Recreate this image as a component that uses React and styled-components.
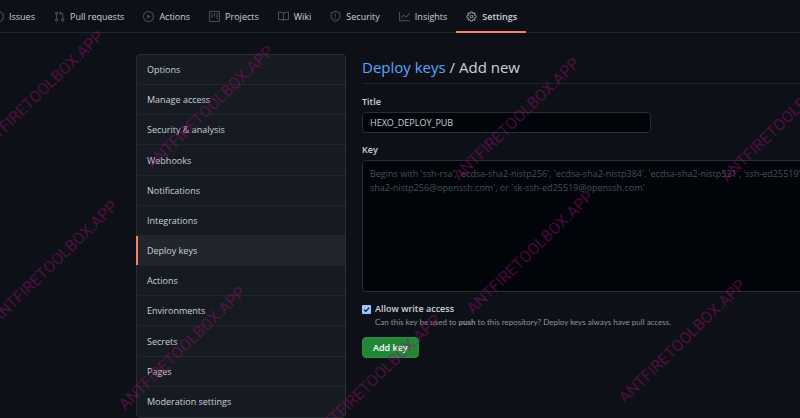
import React from "react";
import styled, { createGlobalStyle } from "styled-components";
import { GoGear } from "react-icons/go";

const GlobalStyle = createGlobalStyle`
  * { box-sizing: border-box; }
  body {
    margin: 0;
    background: #0d1117;
    color: #c9d1d9;
    font-family: "Open Sans", "Noto Sans", sans-serif;
    font-size: 9px;
    line-height: 14px;
    overflow: hidden;
  }
  button, input, textarea { font: inherit; color: inherit; }
`;

const Page = styled.div`
  position: relative;
  overflow: hidden;
  min-height: 100vh;
`;

const NavBar = styled.nav`
  display: flex;
  height: 33px;
  margin-left: -17px;
  border-bottom: 1px solid #21262d;
`;

const Tab = styled.a`
  display: flex;
  flex: none;
  align-items: center;
  gap: 5px;
  height: 33px;
  padding: 2px 9px 0 10px;
  border-bottom: 2px solid ${(p) => (p.$active ? "#f78166" : "transparent")};
  color: #c9d1d9;
  font-weight: ${(p) => (p.$active ? 600 : 400)};
  text-decoration: none;
  white-space: nowrap;
  svg {
    width: 11px;
    height: 11px;
    fill: ${(p) => (p.$active ? "#c9d1d9" : "#484f58")};
  }
`;

const Columns = styled.div`
  display: flex;
  align-items: flex-start;
  gap: 16px;
  padding: 21px 0 0 136px;
`;

const Menu = styled.nav`
  display: grid;
  grid-auto-rows: 1fr;
  flex: none;
  width: 210px;
  min-height: 364px;
  background: #161b22;
  border: 1px solid #282e35;
  border-radius: 4px;
`;

const MenuItem = styled.a`
  display: flex;
  align-items: center;
  margin-left: -1px;
  padding: 1px 10px 0 11px;
  color: #c9d1d9;
  text-decoration: none;
  border-bottom: 1px solid #21262d;
  background: ${(p) => (p.$active ? "#21262d" : "transparent")};
  box-shadow: ${(p) => (p.$active ? "inset 2px 0 0 #f78166" : "none")};
  &:last-child { border-bottom: 0; }
`;

const Main = styled.main`
  flex: 1 0 auto;
  width: 505px;
`;

const Heading = styled.h1`
  margin: 0 0 11px;
  padding: 2px 0 5px;
  border-bottom: 1px solid #21262d;
  font-size: 15px;
  line-height: 22px;
  font-weight: 400;
  a { color: #58a6ff; text-decoration: none; }
`;

const Form = styled.form`
  display: flex;
  flex-direction: column;
  align-items: flex-start;
`;

const Label = styled.label`
  font-weight: 600;
  margin-bottom: ${(p) => p.$gap || 0}px;
`;

const TextInput = styled.input`
  width: 289px;
  height: 21px;
  margin: 0 0 10px;
  padding: 0 7px;
  background: #010409;
  border: 1px solid #282e35;
  border-radius: 4px;
  outline: 0;
`;

const TextArea = styled.textarea`
  display: block;
  width: 100%;
  height: 132px;
  margin: 0 0 10px;
  padding: 6px 7px;
  background: #010409;
  border: 1px solid #282e35;
  border-radius: 4px;
  outline: 0;
  resize: none;
  &::placeholder { color: #484f58; opacity: 1; }
`;

const CheckRow = styled.div`
  display: flex;
  align-items: center;
  gap: 4px;
`;

const CheckMark = styled.span`
  display: grid;
  width: 9px;
  height: 9px;
  > * { grid-area: 1 / 1; }
  svg { width: 9px; height: 9px; pointer-events: none; }
`;

const CheckBox = styled.input`
  appearance: none;
  width: 9px;
  height: 9px;
  margin: 0;
  background: #99c8ff;
  border-radius: 1px;
`;

const Note = styled.p`
  margin: 0 0 9px 13px;
  color: #8b949e;
  font-family: Lato, "Open Sans", sans-serif;
  font-size: 8px;
  line-height: 12px;
`;

const SubmitButton = styled.button`
  height: 21px;
  padding: 0 10px;
  background: #238636;
  border: 1px solid #2e8d41;
  border-radius: 4px;
  color: #fff;
  font-weight: 600;
`;

const Watermarks = styled.div`
  position: absolute;
  inset: 0;
  overflow: hidden;
  pointer-events: none;
`;

const Watermark = styled.span`
  position: absolute;
  left: ${(p) => p.$x}px;
  top: ${(p) => p.$y - 20}px;
  color: rgba(148, 12, 112, 0.5);
  font-family: Roboto, sans-serif;
  font-size: 16px;
  line-height: 24px;
  white-space: nowrap;
  transform: rotate(-44deg);
  transform-origin: 0 20px;
`;

const paths = {
  issue: "M8 1.5a6.5 6.5 0 100 13 6.5 6.5 0 000-13zM0 8a8 8 0 1116 0A8 8 0 010 8zm9.5 0a1.5 1.5 0 11-3 0 1.5 1.5 0 013 0z",
  pull: "M7.177 3.073L9.573.677A.25.25 0 0110 .854v4.792a.25.25 0 01-.427.177L7.177 3.427a.25.25 0 010-.354zM3.75 2.5a.75.75 0 100 1.5.75.75 0 000-1.5zm-2.25.75a2.25 2.25 0 113 2.122v5.256a2.251 2.251 0 11-1.5 0V5.372A2.25 2.25 0 011.5 3.25zM11 2.5h-1V4h1a1 1 0 011 1v5.628a2.251 2.251 0 101.5 0V5A2.5 2.5 0 0011 2.5zm1 10.25a.75.75 0 111.5 0 .75.75 0 01-1.5 0zM3.75 12a.75.75 0 100 1.5.75.75 0 000-1.5z",
  play: "M1.5 8a6.5 6.5 0 1113 0 6.5 6.5 0 01-13 0zM8 0a8 8 0 100 16A8 8 0 008 0zM6.379 5.227A.25.25 0 006 5.442v5.117a.25.25 0 00.379.214l4.264-2.559a.25.25 0 000-.428L6.379 5.227z",
  project: "M1.75 0A1.75 1.75 0 000 1.75v12.5C0 15.216.784 16 1.75 16h12.5A1.75 1.75 0 0016 14.25V1.75A1.75 1.75 0 0014.25 0H1.75zM1.5 1.75a.25.25 0 01.25-.25h12.5a.25.25 0 01.25.25v12.5a.25.25 0 01-.25.25H1.75a.25.25 0 01-.25-.25V1.75zM11.75 3a.75.75 0 00-.75.75v7.5a.75.75 0 001.5 0v-7.5a.75.75 0 00-.75-.75zm-8.25.75a.75.75 0 011.5 0v5.5a.75.75 0 01-1.5 0v-5.5zM8 3a.75.75 0 00-.75.75v3.5a.75.75 0 001.5 0v-3.5A.75.75 0 008 3z",
  book: "M0 1.75A.75.75 0 01.75 1h4.253c1.227 0 2.317.59 3 1.501A3.744 3.744 0 0111.006 1h4.245a.75.75 0 01.75.75v10.5a.75.75 0 01-.75.75h-4.507a2.25 2.25 0 00-1.591.659l-.622.621a.75.75 0 01-1.06 0l-.622-.621A2.25 2.25 0 005.258 13H.75a.75.75 0 01-.75-.75V1.75zm8.755 3a2.25 2.25 0 012.25-2.25H14.5v9h-3.757c-.71 0-1.4.201-1.992.572l.004-7.322zm-1.504 7.324l.004-5.073-.002-2.253A2.25 2.25 0 005.003 2.5H1.5v9h3.757a3.75 3.75 0 011.994.574z",
  shield: "M7.467.133a1.75 1.75 0 011.066 0l5.25 1.68A1.75 1.75 0 0115 3.48V7c0 1.566-.32 3.182-1.303 4.682-.983 1.498-2.585 2.813-5.032 3.855a1.7 1.7 0 01-1.33 0c-2.447-1.042-4.049-2.357-5.032-3.855C1.32 10.182 1 8.566 1 7V3.48a1.75 1.75 0 011.217-1.667l5.25-1.68zm.61 1.429a.25.25 0 00-.153 0l-5.25 1.68a.25.25 0 00-.174.238V7c0 1.358.275 2.666 1.057 3.86.784 1.194 2.121 2.34 4.366 3.297a.2.2 0 00.154 0c2.245-.956 3.582-2.104 4.366-3.298C13.225 9.666 13.5 8.36 13.5 7V3.48a.25.25 0 00-.174-.237l-5.25-1.68zM9 10.5a1 1 0 11-2 0 1 1 0 012 0zm-.25-5.75a.75.75 0 00-1.5 0v3a.75.75 0 001.5 0v-3z",
  graph: "M1.5 1.75a.75.75 0 00-1.5 0v12.5c0 .414.336.75.75.75h14.5a.75.75 0 000-1.5H1.5V1.75zm14.28 2.53a.75.75 0 00-1.06-1.06L10 7.94 7.53 5.47a.75.75 0 00-1.06 0L3.22 8.72a.75.75 0 001.06 1.06L7 7.06l2.47 2.47a.75.75 0 001.06 0l5.25-5.25z",
};

const Icon = ({ name }) => (
  <svg viewBox="0 0 16 16" aria-hidden="true">
    <path fillRule="evenodd" d={paths[name]} />
  </svg>
);

const tabs = [
  ["Issues", "issue"],
  ["Pull requests", "pull"],
  ["Actions", "play"],
  ["Projects", "project"],
  ["Wiki", "book"],
  ["Security", "shield"],
  ["Insights", "graph"],
];

const menu = [
  "Options",
  "Manage access",
  "Security & analysis",
  "Webhooks",
  "Notifications",
  "Integrations",
  "Deploy keys",
  "Actions",
  "Environments",
  "Secrets",
  "Pages",
  "Moderation settings",
];

const marks = [
  [-15, 157],
  [155, 172],
  [461, 184],
  [729, 185],
  [-1, 327],
  [127, 413],
  [322, 441],
  [475, 317],
  [627, 406],
];

const keyHint =
  "Begins with 'ssh-rsa', 'ecdsa-sha2-nistp256', 'ecdsa-sha2-nistp384', 'ecdsa-sha2-nistp521', 'ssh-ed25519', 'sk-ecdsa-sha2-nistp256@openssh.com', or 'sk-ssh-ed25519@openssh.com'";

export default function App() {
  return (
    <Page>
      <GlobalStyle />
      <NavBar aria-label="Repository">
        {tabs.map(([label, icon]) => (
          <Tab key={label} href="#">
            <Icon name={icon} />
            {label}
          </Tab>
        ))}
        <Tab href="#" $active aria-current="page">
          <GoGear />
          Settings
        </Tab>
      </NavBar>
      <Columns>
        <Menu aria-label="Settings">
          {menu.map((label) => (
            <MenuItem key={label} href="#" $active={label === "Deploy keys"}>
              {label}
            </MenuItem>
          ))}
        </Menu>
        <Main>
          <Heading>
            <a href="#">Deploy keys</a> / Add new
          </Heading>
          <Form onSubmit={(e) => e.preventDefault()}>
            <Label htmlFor="title" $gap={3}>Title</Label>
            <TextInput id="title" defaultValue="HEXO_DEPLOY_PUB" />
            <Label htmlFor="key" $gap={3}>Key</Label>
            <TextArea id="key" placeholder={keyHint} spellCheck={false} />
            <CheckRow>
              <CheckMark>
                <CheckBox type="checkbox" id="write" defaultChecked />
                <svg viewBox="0 0 9 9" aria-hidden="true">
                  <path d="M2 4.6l1.8 1.8L7.2 2.6" fill="none" stroke="#10141a" strokeWidth="1.3" />
                </svg>
              </CheckMark>
              <Label htmlFor="write">Allow write access</Label>
            </CheckRow>
            <Note>
              Can this key be used to <strong>push</strong> to this repository? Deploy keys always have pull access.
            </Note>
            <SubmitButton type="submit">Add key</SubmitButton>
          </Form>
        </Main>
      </Columns>
      <Watermarks aria-hidden="true">
        {marks.map(([x, y]) => (
          <Watermark key={`${x}-${y}`} $x={x} $y={y}>ANTFIRETOOLBOX.APP</Watermark>
        ))}
      </Watermarks>
    </Page>
  );
}
